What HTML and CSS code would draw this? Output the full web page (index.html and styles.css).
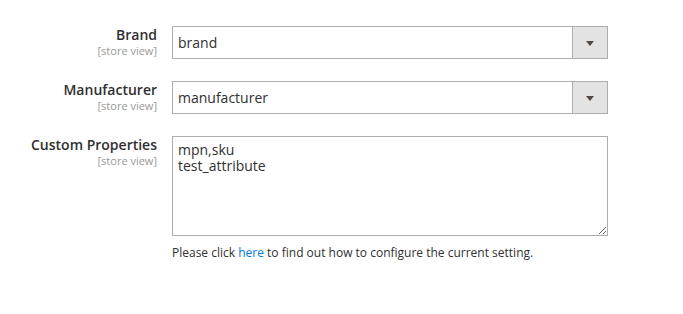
FILE: index.html
```html
<!DOCTYPE html>
<html lang="en">
  <head>
    <meta charset="UTF-8" />
    <meta name="viewport" content="width=device-width, initial-scale=1.0" />
    <title>Configuration</title>
    <link rel="stylesheet" href="styles.css">
  </head>
  <body>
    <div class="fieldset">
      <div class="field">
        <div class="label">
          <span>Brand</span>
          <span class="scope">[store view]</span>
        </div>
        <div class="control">
          <div class="select">
            <span class="select-value">brand</span>
            <span class="select-arrow"></span>
          </div>
        </div>
      </div>

      <div class="field">
        <div class="label">
          <span>Manufacturer</span>
          <span class="scope">[store view]</span>
        </div>
        <div class="control">
          <div class="select">
            <span class="select-value">manufacturer</span>
            <span class="select-arrow"></span>
          </div>
        </div>
      </div>

      <div class="field">
        <div class="label">
          <span>Custom Properties</span>
          <span class="scope">[store view]</span>
        </div>
        <div class="control">
          <textarea class="textarea">mpn,sku
test_attribute</textarea>
          <p class="note">
            Please click <a href="#">here</a> to find out how to configure the current setting.
          </p>
        </div>
      </div>
    </div>
  </body>
</html>
```

FILE: styles.css
```css
* {
  margin: 0;
  padding: 0;
  box-sizing: border-box;
}

body {
  background: #fff;
  font-family: "Open Sans", "Liberation Sans", sans-serif;
  color: #303030;
}

.fieldset {
  padding-top: 26px;
}

.field {
  display: flex;
  margin-bottom: 22px;
}

.label {
  width: 157px;
  display: flex;
  flex-direction: column;
  align-items: flex-end;
  text-align: right;
  font-size: 14px;
  font-weight: 600;
  line-height: 18px;
  color: #303030;
}

.scope {
  font-size: 11px;
  font-weight: 400;
  line-height: 13px;
  color: #999;
}

.control {
  margin-left: 15px;
  width: 436px;
}

.select {
  display: flex;
  height: 33px;
  border: 1px solid #adadad;
  background: #fff;
}

.select-value {
  flex: 1;
  padding-left: 5px;
  font-size: 14px;
  line-height: 31px;
  color: #303030;
}

.select-arrow {
  position: relative;
  width: 35px;
  border-left: 1px solid #adadad;
  background: #e3e3e3;
}

.select-arrow::after {
  content: "";
  position: absolute;
  top: 14px;
  left: 13px;
  border-style: solid;
  border-width: 5px 4px 0 4px;
  border-color: #514943 transparent transparent transparent;
}

.textarea {
  display: block;
  width: 436px;
  height: 100px;
  padding: 5px 5px;
  border: 1px solid #adadad;
  border-radius: 0;
  font-family: "Open Sans", "Liberation Sans", sans-serif;
  font-size: 14px;
  line-height: 16px;
  color: #303030;
  resize: both;
  outline: none;
}

.note {
  margin-top: 8px;
  font-size: 12px;
  line-height: 17px;
  color: #303030;
}

.note a {
  color: #007bdb;
  text-decoration: none;
}
```
